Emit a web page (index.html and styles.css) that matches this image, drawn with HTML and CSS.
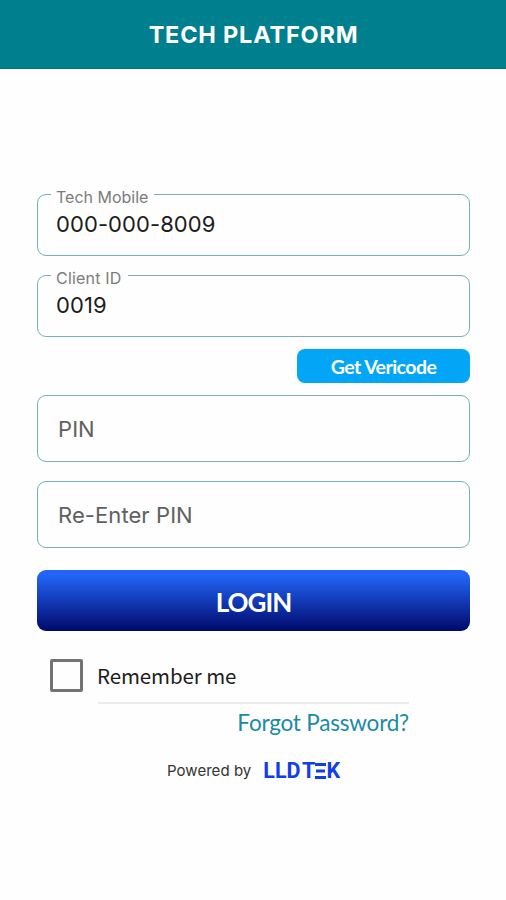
FILE: index.html
```html
<!DOCTYPE html>
<html lang="en">
<head>
  <meta charset="UTF-8">
  <title>Tech Platform</title>
  <meta name="viewport" content="width=device-width, initial-scale=1.0">
  <link rel="stylesheet" href="styles.css">
</head>
<body>
  <header class="topbar">TECH PLATFORM</header>

  <form class="login-form">
    <div class="field">
      <label class="field-label" for="mobile">Tech Mobile</label>
      <input type="text" id="mobile" name="mobile" value="000-000-8009">
    </div>

    <div class="field">
      <label class="field-label client" for="client">Client ID</label>
      <input type="text" id="client" name="client" value="0019">
    </div>

    <button type="button" class="vericode">Get Vericode</button>

    <div class="field pin">
      <input type="text" name="pin" placeholder="PIN" aria-label="PIN">
    </div>

    <div class="field pin">
      <input type="text" name="pin2" placeholder="Re-Enter PIN" aria-label="Re-Enter PIN">
    </div>

    <button type="submit" class="login">LOGIN</button>

    <label class="remember">
      <input type="checkbox" name="remember">
      <span>Remember me</span>
    </label>

    <div class="forgot"><a href="#">Forgot Password?</a></div>
  </form>

  <footer>
    <span class="powered">Powered by</span>
    <span class="brand">
      <span class="brand-lld">LLD</span><span class="brand-t">T</span>
      <svg width="11" height="16" viewBox="0 0 11 16" role="img" aria-label="E">
        <path d="M0 1.5h11M1 8h9M0 14.5h11" stroke="#103fe8" stroke-width="2.8"/>
      </svg>
      <span class="brand-k">K</span>
    </span>
  </footer>
</body>
</html>
```

FILE: styles.css
```css
* { box-sizing: border-box; }
body { margin: 0; background: #fefefe; font-family: Inter, sans-serif; color: #1c1c1c; }

.topbar {
  height: 69px; line-height: 70px; padding-left: 1px;
  background: #007f8e; border-bottom: 1px solid #00707f;
  color: #fff; text-align: center;
  font-size: 23.5px; font-weight: bold; letter-spacing: 0.8px;
}

.login-form { display: flex; flex-direction: column; padding: 125px 36px 0 37px; }

.field {
  position: relative; height: 62px; margin-bottom: 19px;
  border: 1.5px solid #75b1b5; border-radius: 9px;
}
.field input {
  display: block; width: 100%; height: 58px; padding: 0 18px;
  border: none; outline: none; background: none;
  font: 22px Inter, sans-serif; letter-spacing: 0.08px; color: #1c1c1c;
}
.field input::placeholder { color: #606060; opacity: 1; }
/* label cuts through the top border */
.field-label {
  position: absolute; left: 13px; top: -9px; padding: 0 6px 0 5px;
  background: #fefefe; font-size: 16px; line-height: 22px; color: #7c7c7c;
}
.field-label.client { letter-spacing: 0.2px; }

.vericode {
  align-self: flex-end; width: 173px; height: 34px; margin: -7px 0 12px; padding: 1px 0 0;
  border: none; border-radius: 8px; background: #03a6f6; color: #fff;
  font: bold 19.5px Lato, sans-serif; letter-spacing: -0.55px;
}

.field.pin { height: 67px; }
.field.pin input { height: 65px; padding: 0 20px; }

.login {
  height: 61px; margin-top: 3px; padding: 2px 0 0; border: none; border-radius: 9px;
  background: linear-gradient(#2265f8 8%, #00096b); color: #fff;
  font: bold 26px Lato, sans-serif; letter-spacing: -1px;
}

.remember { display: flex; align-items: center; gap: 14px; margin: 28px 0 0 13px; height: 33px; }
.remember input {
  appearance: none; width: 33px; height: 33px; margin: 0;
  border: 3px solid #737373; border-radius: 2px;
}
.remember span { margin-top: -1px; font: 20.5px/30px "Noto Sans CJK SC", sans-serif; letter-spacing: -0.1px; }

.forgot {
  width: 311px; margin: 10px 0 0 61px; padding-top: 4px;
  border-top: 2px solid #ebebeb; text-align: right;
}
.forgot a { font: 22.5px/29px Lato, sans-serif; letter-spacing: -0.2px; color: #1a8ba5; text-decoration: none; }

footer { display: flex; align-items: center; margin: 21px 0 0 167px; height: 24px; }
.powered { font-size: 15px; color: #333; letter-spacing: 0.05px; }
.brand {
  display: flex; align-items: center; margin: 2px 0 0 12px;
  font: bold 21.5px/24px Roboto, sans-serif; color: #103fe8;
}
.brand-t { margin-left: 1.5px; }
```
